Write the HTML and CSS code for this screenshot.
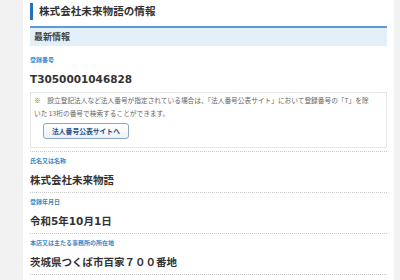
FILE: index.html
```html
<!DOCTYPE html>
<html lang="ja">
<head>
  <meta charset="UTF-8">
  <title>株式会社未来物語の情報</title>
  <link rel="stylesheet" href="styles.css">
</head>
<body>

  <div class="page">
    <!-- ページタイトル -->
    <h1 class="page-title">株式会社未来物語の情報</h1>

    <!-- 最新情報 -->
    <section class="info">
      <h2 class="info-head">最新情報</h2>

      <div class="info-row">
        <div class="info-label">登録番号</div>
        <div class="info-value">T3050001046828</div>
        <div class="note">
          <p>※　設立登記法人など法人番号が指定されている場合は、「法人番号公表サイト」において登録番号の「T」を除いた 13桁の番号で検索することができます。</p>
          <button class="note-btn">法人番号公表サイトへ</button>
        </div>
      </div>

      <div class="info-row">
        <div class="info-label">氏名又は名称</div>
        <div class="info-value">株式会社未来物語</div>
      </div>

      <div class="info-row">
        <div class="info-label">登録年月日</div>
        <div class="info-value">令和5年10月1日</div>
      </div>

      <div class="info-row">
        <div class="info-label">本店又は主たる事務所の所在地</div>
        <div class="info-value">茨城県つくば市百家７００番地</div>
      </div>
    </section>
  </div>

</body>
</html>
```

FILE: styles.css
```css
/* 全体 */
body {
  margin: 0;
  background-color: #f2f2f2;
  font-family: "DejaVu Sans", "Noto Sans CJK JP", sans-serif;
  color: #333;
}

.page {
  margin-left: 23px;
  width: 371px;
  min-height: 280px;
  box-sizing: border-box;
  padding: 3px 7px 0;
  background-color: #fff;
}

/* タイトル */
.page-title {
  margin: 0;
  border-left: 3px solid #2372b9;
  padding-left: 6px;
  font-size: 10.6px;
  line-height: 17px;
  font-weight: bold;
  color: #333;
}

/* 最新情報 見出し */
.info-head {
  margin: 6px 0 5px;
  border-top: 2px solid #5f9bd0;
  padding-left: 4px;
  background-color: #e4f0f9;
  font-size: 9px;
  line-height: 18px;
  font-weight: bold;
  color: #444;
}

.info-row {
  padding: 4px 0 3px;
  border-bottom: 1px dotted #c8c8c8;
}

.info-label {
  font-size: 6px;
  line-height: 10px;
  font-weight: bold;
  color: #3a87c8;
}

.info-value {
  margin-top: 6px;
  font-size: 10.5px;
  line-height: 17px;
  font-weight: bold;
  color: #333;
}

/* 注記ボックス */
.note {
  margin-top: 4px;
  border: 1px solid #e6e6e6;
  padding: 1px 12px 8px 3px;
}

.note p {
  margin: 0;
  font-family: "Noto Sans CJK JP", sans-serif;
  font-size: 6.7px;
  line-height: 13px;
  color: #666;
}

.note-btn {
  display: block;
  height: 16px;
  margin: 3px 0 0 9px;
  padding: 0 8px;
  border: 1px solid #8aa6c8;
  border-radius: 3px;
  background: linear-gradient(#ffffff, #edf1f6);
  font-family: "Noto Sans CJK JP", sans-serif;
  font-size: 6.8px;
  font-weight: bold;
  color: #1f4f8a;
  cursor: pointer;
}
```
